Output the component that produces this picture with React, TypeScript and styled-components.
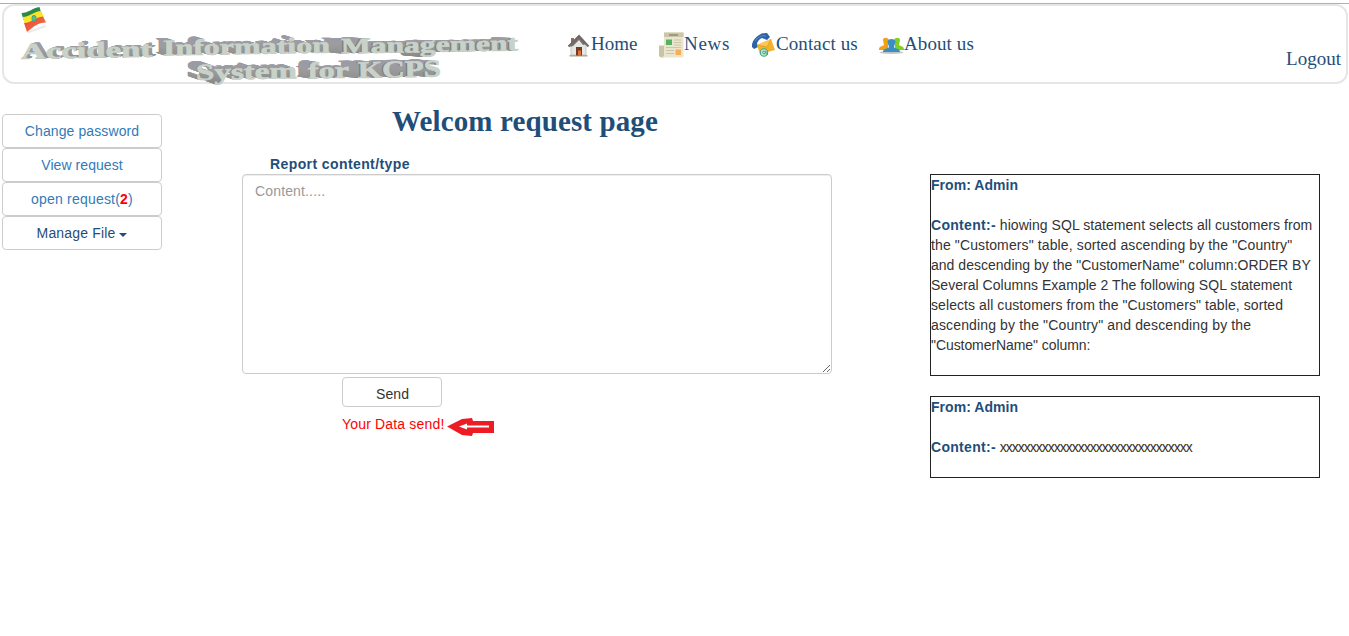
import React from "react";
import styled, { createGlobalStyle } from "styled-components";

const GlobalStyle = createGlobalStyle`
  * { box-sizing: border-box; }
  body {
    margin: 0;
    background: #fff;
    color: #333;
    font: 14px/20px "Liberation Sans", Arial, sans-serif;
    overflow: hidden;
  }
`;

const Page = styled.div`
  height: 636px;
  padding-top: 3px;
`;

const Header = styled.header`
  height: 81px;
  border-top: 1px solid #b0b0b0;
  padding: 0 1px 0 2px;
`;

const HeaderPanel = styled.div`
  height: 80px;
  border: 2px solid #e6e6e6;
  border-radius: 12px;
  display: flex;
  align-items: flex-start;
`;

const Logo = styled.svg`
  width: 530px;
  height: 84px;
  margin: -2px 0 0 -4px;
  overflow: visible;
  flex: none;
  font-family: "Liberation Serif", "Times New Roman", serif;
  font-weight: bold;
`;

const Nav = styled.nav`
  display: flex;
  margin-top: 26px;
  padding-left: 36px;
  flex: 1;
`;

const NavLink = styled.a<{ $width: number; $track: number }>`
  display: flex;
  width: ${(p) => p.$width}px;
  height: 28px;
  color: #1f4e79;
  font: 19px/24px "Liberation Serif", "Times New Roman", serif;
  letter-spacing: ${(p) => p.$track}px;
  white-space: nowrap;
`;

const NavIcon = styled.svg`
  width: 25px;
  height: 28px;
  flex: none;
`;

const Logout = styled.a`
  margin: 41px 5px 0 0;
  color: #1f4e79;
  font: 19px/24px "Liberation Serif", "Times New Roman", serif;
`;

const Body = styled.div`
  display: flex;
`;

const Sidebar = styled.aside`
  width: 160px;
  margin: 30px 0 0 2px;
`;

const MenuButton = styled.button<{ $dark?: boolean; $track: number }>`
  display: flex;
  align-items: center;
  justify-content: center;
  width: 160px;
  height: 34px;
  padding: 0;
  border: 1px solid #ccc;
  border-radius: 4px;
  background: #fff;
  color: ${(p) => (p.$dark ? "#1f4e79" : "#337ab7")};
  font: 14px/20px "Liberation Sans", Arial, sans-serif;
  letter-spacing: ${(p) => p.$track}px;
`;

const Count = styled.b`
  color: #f00;
`;

const Caret = styled.span`
  margin: 3px 0 0 4px;
  border-top: 4px solid #1f4e79;
  border-left: 4px solid transparent;
  border-right: 4px solid transparent;
`;

const Main = styled.main`
  width: 590px;
  margin: 19px 0 0 80px;
`;

const Title = styled.h1`
  margin: 0 0 0 150px;
  color: #1f4e79;
  font: bold 29px/36px "Liberation Serif", "Times New Roman", serif;
  letter-spacing: 0.12px;
  white-space: nowrap;
`;

const Label = styled.label`
  display: block;
  margin: 15px 0 0 28px;
  color: #1f4e79;
  font-weight: bold;
  letter-spacing: 0.4px;
`;

const ContentArea = styled.textarea`
  display: block;
  width: 590px;
  height: 200px;
  padding: 6px 12px;
  border: 1px solid #ccc;
  border-radius: 4px;
  box-shadow: inset 0 1px 1px rgba(0, 0, 0, 0.075);
  font: 14px/20px "Liberation Sans", Arial, sans-serif;
  letter-spacing: 0.15px;
  &::placeholder { color: #999; }
`;

const SendButton = styled.button`
  display: block;
  width: 100px;
  height: 30px;
  margin: 3px 0 0 100px;
  padding: 3px 0 0 1px;
  border: 1px solid #ccc;
  border-radius: 4px;
  background: #fff;
  color: #333;
  font: 14px/20px "Liberation Sans", Arial, sans-serif;
  letter-spacing: 0.1px;
`;

const Status = styled.div`
  display: flex;
  margin: 7px 0 0 100px;
  color: #f00;
`;

const StatusText = styled.span`
  width: 105px;
  letter-spacing: 0.17px;
`;

const Arrow = styled.svg`
  width: 48px;
  height: 20px;
  margin-top: 3px;
`;

const Messages = styled.section`
  width: 390px;
  margin: 90px 0 0 98px;
`;

const Message = styled.article`
  border: 1px solid #222;
  margin-bottom: 20px;
  padding-bottom: 20px;
`;

const Strong = styled.b`
  color: #1f4e79;
  letter-spacing: 0.3px;
`;

const Sender = styled.div`
  margin-bottom: 20px;

  ${Strong} {
    letter-spacing: 0.04px;
  }
`;

const Line = styled.div<{ $track: number }>`
  height: 20px;
  white-space: nowrap;
  letter-spacing: ${(p) => p.$track}px;
`;

const Repeated = styled.span`
  letter-spacing: -1px;
`;

type Word = { text: string; x: number; y: number; width: number; size: number; dx: number; dy: number };

const words: Word[] = [
  { text: "Accident", x: 21, y: 59, width: 131, size: 22.5, dx: 4, dy: -1.5 },
  { text: "Information", x: 163, y: 55.5, width: 167, size: 22.5, dx: -8, dy: -2.5 },
  { text: "Management", x: 341, y: 53.5, width: 177, size: 22, dx: -20, dy: -1.2 },
  { text: "System", x: 196, y: 80, width: 101, size: 23, dx: -10, dy: -3.5 },
  { text: "for", x: 308, y: 78.5, width: 41, size: 23, dx: -12, dy: -2 },
  { text: "KCPS", x: 358, y: 78, width: 83, size: 24, dx: -20, dy: -1.5 },
];

const STEPS = 20;

function BrandLogo() {
  return (
    <Logo viewBox="0 4 530 84">
      <defs>
        <linearGradient id="red" x1="0" y1="0" x2="1" y2="1">
          <stop offset="0" stopColor="#e8452f" />
          <stop offset="1" stopColor="#f4764f" />
        </linearGradient>
        <linearGradient id="side" x1="0" y1="0" x2="0" y2="1">
          <stop offset="0" stopColor="#9a9aad" />
          <stop offset="0.5" stopColor="#9c9c9f" />
          <stop offset="1" stopColor="#888a89" />
        </linearGradient>
        {words.map((w, i) => (
          <text
            key={w.text}
            id={`word${i}`}
            x={w.x}
            y={w.y}
            fontSize={w.size}
            textLength={w.width}
            lengthAdjust="spacingAndGlyphs"
            transform={`rotate(-1 ${w.x} ${w.y})`}
          >
            {w.text}
          </text>
        ))}
      </defs>
      <path d="M26 32l19-7 1 2-17 6z" fill="#ebebeb" />
      <path d="M21.5 13c7 0 11-5 18-6l2 7c-8 1-11 5-18 6z" fill="#2b8a45" />
      <path d="M22.5 17c8 0 11-6 19-6l2.500 7c-8 1-11 6-19 6z" fill="#f9e52c" />
      <path d="M24 23c8 0 11-6 19-6.500l3 6c-8 0-12 4-19 9.500z" fill="url(#red)" />
      <ellipse cx="34" cy="18.5" rx="2.5" ry="3.5" fill="#35a8a0" />
      <path d="M34 16v5M32 19l4-1" stroke="#7bc45e" />
      {words.map((w, i) =>
        Array.from({ length: STEPS }, (_, s) => {
          const t = 1 - s / STEPS;
          return (
            <use
              key={`${i}-${s}`}
              href={`#word${i}`}
              x={w.dx * t}
              y={w.dy * t}
              fill={s > 17 ? "#7d8180" : "url(#side)"}
            />
          );
        })
      )}
      {words.map((w, i) => (
        <use key={w.text} href={`#word${i}`} fill="#c9d2c9" stroke="#c9d2c9" strokeWidth="0.7" />
      ))}
    </Logo>
  );
}

function HomeIcon() {
  return (
    <NavIcon viewBox="0 0 25 28">
      <path d="M5 6h3v5H5z" fill="#8b6f68" />
      <path d="M5 14l8-8 7 8v9H5z" fill="#e6e6e4" stroke="#b5b5b2" strokeWidth=".7" />
      <path d="M7 10l6-6 7 8-3 1-4-5-6 6-3 1z" fill="#77706c" />
      <path d="M2.5 14.5L13 4l9.5 10.5" fill="none" stroke="#6f6763" strokeWidth="2" />
      <path d="M3.5 23.8h18" stroke="#a3a78e" strokeWidth="1.4" />
      <path d="M10 15h6v8.5h-6z" fill="#743c26" />
      <path d="M12 18.5h3v5h-3z" fill="#e27035" />
    </NavIcon>
  );
}

function NewsIcon() {
  return (
    <NavIcon viewBox="0 0 25 28">
      <path d="M0 13.5h5v12H2l-2-1.5z" fill="#c9c4a5" />
      <path d="M5 .5h19.5v24l-1 1H3l2-2z" fill="#e9e5cf" />
      <path d="M5 .5h19.5V5H5z" fill="#cbc6a9" />
      <path d="M10 3h9" stroke="#8f8b70" strokeWidth="1.5" />
      <path d="M7 7.5h6V13H7z" fill="#55b35d" />
      <path d="M16.500 17.5h5.500v5.500h-5.500z" fill="#fbad55" />
      <path d="M15 8h7M15 10.5h7M15 13h7M7 15.5h15M7 18.5h8M7 21.5h8" stroke="#cbc6a9" />
    </NavIcon>
  );
}

function ContactIcon() {
  return (
    <NavIcon viewBox="0 0 25 28">
      <path d="M1 15C0 8 9 0 16 1l3 4-3 3-5-2c-3 1-5 4-5 6l1 3-4 2z" fill="#2d62aa" />
      <path d="M4 9c3-4 7-6 11-5" fill="none" stroke="#5888c4" strokeWidth="1.1" />
      <path d="M6 13l14-6 4 11-15 4z" fill="#f3b22c" />
      <path d="M6 13l14-6-4 8z" fill="#fac853" />
      <path d="M6 13l10 2 4-8" fill="none" stroke="#dc9c20" strokeWidth=".8" />
      <circle cx="13" cy="20.500" r="3.700" fill="#cbe8cd" stroke="#35a78d" strokeWidth="1.1" />
      <circle cx="13" cy="20.500" r="1.4" fill="none" stroke="#35a78d" />
      <path d="M15 18.500v3l2 1" fill="none" stroke="#35a78d" />
    </NavIcon>
  );
}

function PeopleIcon() {
  return (
    <NavIcon viewBox="0 0 25 28">
      <ellipse cx="12.5" cy="20.5" rx="12" ry="1.5" fill="#c4c4c4" />
      <path d="M4 8c0-3 5-3 6 0l-1 5v5H0c0-4 2-3 5-5z" fill="#f59e18" />
      <path d="M21 8c0-3-5-3-6 0l1 5v5h9c0-4-2-3-5-5z" fill="#83cd27" />
      <path d="M8.500 10c0-4 8-4 8 0l-1.500 5c1 2 6 1 6 5H4c0-4 5-3 6-5z" fill="#398fbf" />
    </NavIcon>
  );
}

const firstLines: [string, number][] = [
  ['the "Customers" table, sorted ascending by the "Country"', 0.12],
  ['and descending by the "CustomerName" column:ORDER BY', 0.02],
  ["Several Columns Example 2 The following SQL statement", 0.03],
  ['selects all customers from the "Customers" table, sorted', 0.08],
  ['ascending by the "Country" and descending by the', 0.14],
  ['"CustomerName" column:', -0.07],
];

export default function App() {
  return (
    <Page>
      <GlobalStyle />
      <Header>
        <HeaderPanel>
          <BrandLogo />
          <Nav>
            <NavLink $width={93} $track={0}><HomeIcon />Home</NavLink>
            <NavLink $width={92} $track={0.7}><NewsIcon />News</NavLink>
            <NavLink $width={128} $track={0.1}><ContactIcon />Contact us</NavLink>
            <NavLink $width={100} $track={0.1}><PeopleIcon />About us</NavLink>
          </Nav>
          <Logout>Logout</Logout>
        </HeaderPanel>
      </Header>
      <Body>
        <Sidebar>
          <MenuButton $track={0.1}>Change password</MenuButton>
          <MenuButton $track={0.06}>View request</MenuButton>
          <MenuButton $track={0.2}>open request(<Count>2</Count>)</MenuButton>
          <MenuButton $track={0.16} $dark>Manage File<Caret /></MenuButton>
        </Sidebar>
        <Main>
          <Title>Welcom request page</Title>
          <Label htmlFor="content">Report content/type</Label>
          <ContentArea id="content" placeholder="Content....." />
          <SendButton>Send</SendButton>
          <Status>
            <StatusText>Your Data send!</StatusText>
            <Arrow viewBox="0 0 48 20">
              <path d="M0 9.5L15 2l10-1 1 3h21v12H26l-1 3-10-1z" fill="#ed1c24" />
              <path d="M12 9.5l8-3v2h22v2H20v2z" fill="#fff" />
            </Arrow>
          </Status>
        </Main>
        <Messages>
          <Message>
            <Sender><Strong>From: Admin</Strong></Sender>
            <Line $track={0.05}><Strong>Content:-</Strong> hiowing SQL statement selects all customers from</Line>
            {firstLines.map(([text, track]) => <Line key={text} $track={track}>{text}</Line>)}
          </Message>
          <Message>
            <Sender><Strong>From: Admin</Strong></Sender>
            <Line $track={0}><Strong>Content:-</Strong> <Repeated>{"x".repeat(32)}</Repeated></Line>
          </Message>
        </Messages>
      </Body>
    </Page>
  );
}
